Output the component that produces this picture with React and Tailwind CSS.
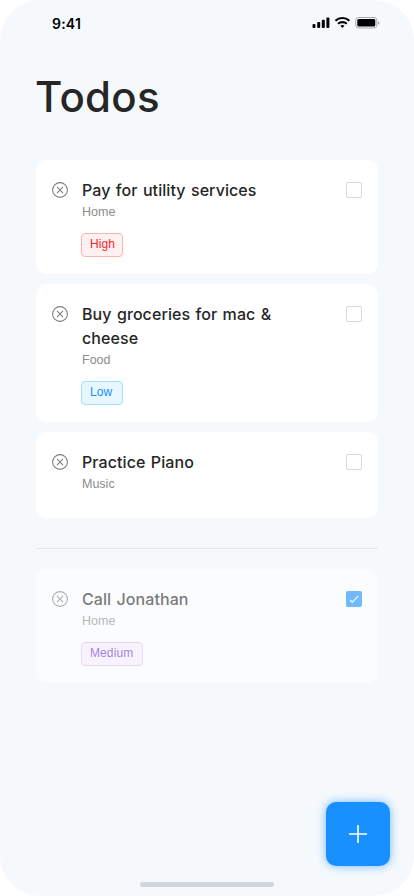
import React from "react";

const tagStyles = {
  High: "w-[42px] border-[#ffb3b0] bg-[#fff1f0] text-[#f5222d]",
  Low: "w-[42px] border-[#a3deff] bg-[#e6f7ff] text-[#1890ff]",
  Medium: "w-[62px] border-[#dcc0fb] bg-[#f9f0ff] text-[#722ed1]",
};

const open = [
  { lines: ["Pay for utility services"], list: "Home", tag: "High", height: "h-[114px]" },
  { lines: ["Buy groceries for mac &", "cheese"], list: "Food", tag: "Low", height: "h-[138px]" },
  { lines: ["Practice Piano"], list: "Music", height: "h-[86px]" },
];
const done = { lines: ["Call Jonathan"], list: "Home", tag: "Medium", height: "h-[114px]", done: true };

function Remove() {
  return (
    <svg className="mt-[6px] h-4 w-4 shrink-0" viewBox="0 0 16 16" fill="none" stroke="#808080" strokeWidth="1.1">
      <circle cx="8" cy="8" r="7.4" />
      <path d="M5 4.8 11 11.2M11 4.8 5 11.2" />
    </svg>
  );
}

function Checkbox({ checked }) {
  if (!checked) return <div className="mt-[6px] h-4 w-4 shrink-0 rounded-[2px] border border-[#d9d9d9] bg-white" />;
  return (
    <div className="mt-[6px] h-4 w-4 shrink-0 rounded-[2px] bg-[#1890ff]">
      <svg viewBox="0 0 16 16" className="h-4 w-4" fill="none" stroke="#fff" strokeWidth="1.1">
        <path d="M4 8.8 6.3 11.2 12.4 4.8" />
      </svg>
    </div>
  );
}

function Card({ todo }) {
  return (
    <div className={`flex rounded-[10px] bg-white px-4 pt-4 ${todo.height} ${todo.done ? "opacity-60" : ""}`}>
      <Remove />
      <div className="ml-[14px] min-w-0 flex-1">
        {todo.lines.map((line) => (
          <div key={line} className="h-6 font-[Inter,sans-serif] text-[16px] leading-[28px] font-medium tracking-[0.08px] whitespace-nowrap text-[#262626] [word-spacing:1px]">
            {line}
          </div>
        ))}
        <div className="mt-1 h-4 text-[12.5px] leading-4 text-[#8c8c8c]">{todo.list}</div>
        {todo.tag && (
          <div className={`mt-[13px] -ml-px box-border flex h-6 items-center rounded-[4px] border-[1.5px] pb-[3px] pl-2 text-[12px] leading-4 tracking-[0.1px] ${tagStyles[todo.tag]}`}>
            {todo.tag}
          </div>
        )}
      </div>
      <Checkbox checked={todo.done} />
    </div>
  );
}

function StatusBar() {
  return (
    <header className="flex h-[46px] items-start justify-between pt-[16px] pr-[34px] pl-[52px]">
      <span className="font-[Inter,sans-serif] text-[14px] leading-4 font-semibold tracking-[0.2px] text-black">9:41</span>
      <svg className="h-[14px] w-[68px]" viewBox="0 0 68 14" fill="#000">
        <rect x="0.5" y="8" width="3" height="4" rx="1" />
        <rect x="5.2" y="6" width="3" height="6" rx="1" />
        <rect x="9.8" y="3.8" width="3" height="8.2" rx="1" />
        <rect x="14.4" y="1.4" width="3" height="10.6" rx="1" />
        <g fill="none" stroke="#000" strokeWidth="2.1">
          <path d="M23.4 4.8a10.3 10.3 0 0 1 14 0" />
          <path d="M26 7.8a6.5 6.5 0 0 1 8.8 0" />
        </g>
        <path d="M28.3 9.8a3.2 3.2 0 0 1 4.2 0L30.4 12Z" />
        <rect x="43.8" y="1.5" width="21" height="10.5" rx="2.8" fill="none" stroke="#a6a8aa" />
        <rect x="45.3" y="3" width="18" height="7.5" rx="1.5" />
        <path d="M66 5v4q1.5-.8 1.5-2T66 5Z" fill="#a6a8aa" />
      </svg>
    </header>
  );
}

export default function App() {
  return (
    <div className="h-[896px] w-[414px] overflow-hidden bg-white font-['Liberation_Sans',Arial,sans-serif]">
      <div className="flex h-full flex-col rounded-[40px] bg-[#f5f9fc]">
        <StatusBar />
        <main className="flex flex-1 flex-col px-9">
          <h1 className="mt-[25px] -ml-px h-[89px] font-[Inter,sans-serif] text-[42px] leading-[52px] font-medium tracking-[0.3px] text-[#262626]">Todos</h1>
          <div className="flex flex-col gap-[10px]">
            {open.map((todo) => (
              <Card key={todo.list} todo={todo} />
            ))}
          </div>
          <hr className="mt-[30px] mb-5 border-t border-[#e2e6e9]" />
          <Card todo={done} />
        </main>
        <footer className="flex h-[94px] flex-col">
          <button className="mr-6 flex h-16 w-16 items-center justify-center self-end rounded-[10px] bg-[#1890ff] shadow-[0_0_10px_rgba(24,144,255,0.6)]">
            <svg className="h-[18px] w-[18px]" viewBox="0 0 18 18" fill="none" stroke="#fff" strokeWidth="1.6">
              <path d="M9 0v18M0 9h18" />
            </svg>
          </button>
          <div className="mt-4 h-[5px] w-[134px] self-center rounded-full bg-[#d1d5df]" />
        </footer>
      </div>
    </div>
  );
}
